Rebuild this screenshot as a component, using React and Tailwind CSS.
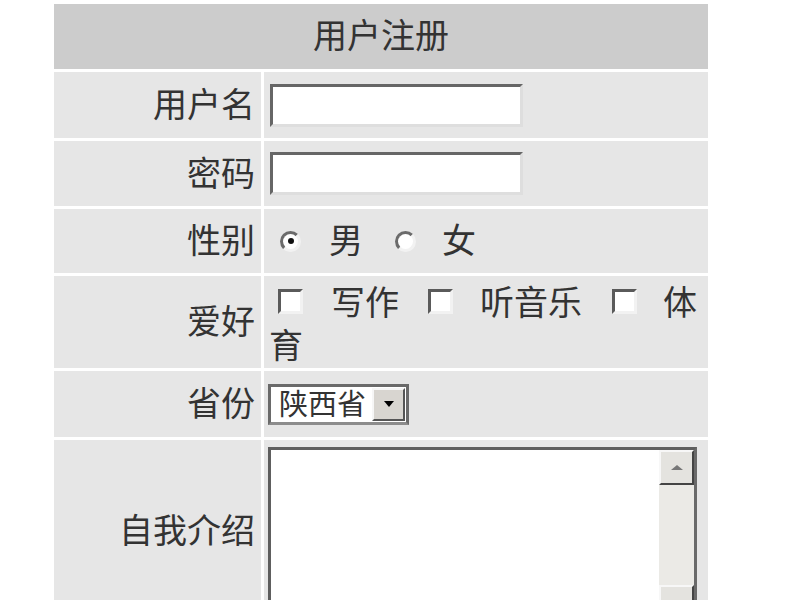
import React from "react";

const font = { fontFamily: '"Noto Sans CJK SC", "Noto Sans", sans-serif' };

function Radio({ checked, className = "" }) {
  return (
    <span
      className={`flex h-[21px] w-[21px] shrink-0 items-center justify-center rounded-full border-[3px] border-t-[#6b6b6b] border-l-[#6b6b6b] border-r-[#f2f2f2] border-b-[#f2f2f2] bg-white ${className}`}
    >
      {checked && <span className="h-[6px] w-[6px] rounded-full bg-[#111]" />}
    </span>
  );
}

function Checkbox({ className = "" }) {
  return (
    <span
      className={`inline-block h-[25px] w-[25px] align-middle border-[3px] border-t-[#5a5a5a] border-l-[#5a5a5a] border-r-[#f2f2f2] border-b-[#f2f2f2] bg-white ${className}`}
    />
  );
}

function Row({ label, height, children }) {
  return (
    <div className="grid grid-cols-[207px_444px] gap-x-[3px]" style={{ height }}>
      <div className="flex items-center justify-end bg-[#e6e6e6] pb-[5px] pr-[6px] text-[34px] text-[#333]">
        {label}
      </div>
      <div className="flex items-center bg-[#e6e6e6] pl-[4px] text-[34px] text-[#333]">
        {children}
      </div>
    </div>
  );
}

export default function App() {
  return (
    <div className="h-[600px] overflow-hidden bg-white" style={font}>
      <div className="ml-[54px] mt-[4px] flex w-[654px] flex-col gap-[3px]">
        <div className="flex h-[65px] items-center justify-center bg-[#cccccc] pb-[6px] text-[34px] text-[#333]">
          用户注册
        </div>

        <Row label="用户名" height={66}>
          <input
            type="text"
            className="ml-[2px] h-[43px] w-[253px] border-[3px] border-t-[#666] border-l-[#666] border-r-[#dedede] border-b-[#dedede] bg-white outline-none"
          />
        </Row>

        <Row label="密码" height={65}>
          <input
            type="password"
            className="ml-[2px] h-[43px] w-[253px] border-[3px] border-t-[#666] border-l-[#666] border-r-[#dedede] border-b-[#dedede] bg-white outline-none"
          />
        </Row>

        <Row label="性别" height={64}>
          <div className="flex items-center">
            <Radio checked className="ml-[12px]" />
            <span className="ml-[28px] pb-[5px]">男</span>
            <Radio className="ml-[32px]" />
            <span className="ml-[26px] pb-[5px]">女</span>
          </div>
        </Row>

        <Row label="爱好" height={92}>
          <div className="ml-[1px] w-[434px] pb-[4px] leading-[38px]">
            <Checkbox className="ml-[9px] mr-[28px]" />
            <span className="align-middle">写作</span>
            <Checkbox className="ml-[29px] mr-[27px]" />
            <span className="align-middle">听音乐</span>
            <Checkbox className="ml-[30px] mr-[26px]" />
            <span className="align-middle">体育</span>
          </div>
        </Row>

        <Row label="省份" height={66}>
          <div className="flex h-[41px] w-[141px] border-[3px] border-[#6a6a6a] border-b-[#8c8c8c] bg-white">
            <span className="flex flex-1 items-center pb-[3px] pl-[8px] text-[29px] leading-none text-[#333]">
              陕西省
            </span>
            <span className="my-[1px] mr-[1px] flex w-[33px] items-center justify-center border-2 border-t-[#f6f6f6] border-l-[#f6f6f6] border-r-[#555] border-b-[#555] bg-[#d8d5d0]">
              <span className="h-0 w-0 border-x-[5px] border-t-[6px] border-x-transparent border-t-black" />
            </span>
          </div>
        </Row>

        <div className="grid h-[190px] grid-cols-[207px_444px] gap-x-[3px]">
          <div className="flex items-center justify-end bg-[#e6e6e6] pb-[14px] pr-[6px] text-[34px] text-[#333]">
            自我介绍
          </div>
          <div className="bg-[#e6e6e6] pl-[4px] pt-[7px]">
            <div className="flex h-[176px] w-[429px] border-[3px] border-t-[#5e5e5e] border-l-[#5e5e5e] border-r-[#6a6a6a] border-b-[#dedede] bg-white">
              <div className="flex-1" />
              <div className="flex w-[35px] flex-col bg-[#ebeae6]">
                <div className="flex h-[35px] items-center justify-center border-2 border-t-[#f7f7f7] border-l-[#f7f7f7] border-r-[#444] border-b-[#444] bg-[#e4e3df]">
                  <span className="h-0 w-0 border-x-[6px] border-b-[5px] border-x-transparent border-b-[#777]" />
                </div>
                <div className="flex-1" />
                <div className="flex h-[35px] items-center justify-center border-2 border-t-[#f7f7f7] border-l-[#f7f7f7] border-r-[#444] border-b-[#444] bg-[#e4e3df]">
                  <span className="h-0 w-0 border-x-[6px] border-t-[5px] border-x-transparent border-t-[#777]" />
                </div>
              </div>
            </div>
          </div>
        </div>
      </div>
    </div>
  );
}
